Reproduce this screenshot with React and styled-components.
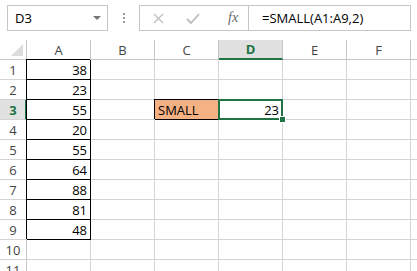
import React from 'react'
import styled, { createGlobalStyle, css } from 'styled-components'

const GlobalStyle = createGlobalStyle`
  body {
    margin: 0;
    background: #fff;
    font-family: "Open Sans", "Liberation Sans", sans-serif;
    font-size: 13px;
    color: #000;
  }
`

const GREEN = '#217346'
const GRID = '#d4d4d4'
const HEAD_LINE = '#c6c6c6'

const Page = styled.div`
  width: 417px;
  height: 271px;
  overflow: hidden;
`

const Toolbar = styled.div`
  display: flex;
  align-items: flex-start;
  height: 36px;
  padding: 5px 0 0 7px;
  box-sizing: border-box;
`

const NameBox = styled.div`
  width: 101px;
  height: 26px;
  box-sizing: border-box;
  border: 1px solid ${HEAD_LINE};
  display: flex;
  align-items: center;
  justify-content: space-between;
  padding: 0 6px 0 7px;
  color: #000;
`

const Caret = styled.span`
  width: 0;
  height: 0;
  border-left: 4px solid transparent;
  border-right: 4px solid transparent;
  border-top: 4px solid #777;
`

const Grip = styled.div`
  width: 31px;
  height: 26px;
  display: flex;
  flex-direction: column;
  align-items: center;
  justify-content: center;
  gap: 2px;

  span {
    width: 2px;
    height: 2px;
    background: #999;
  }
`

const FormulaBar = styled.div`
  width: 272px;
  height: 26px;
  box-sizing: border-box;
  border: 1px solid ${HEAD_LINE};
  display: flex;
  align-items: center;
`

const FxButtons = styled.div`
  width: 109px;
  height: 100%;
  box-sizing: border-box;
  border-right: 1px solid ${HEAD_LINE};
  display: flex;
  align-items: center;
  padding-left: 13px;
  gap: 22px;
`

const Fx = styled.span`
  font-family: "Liberation Serif", serif;
  font-style: italic;
  font-size: 14px;
  color: #666;
  margin-left: 6px;
`

const Formula = styled.div`
  padding-left: 13px;
  white-space: nowrap;
`

const Sheet = styled.div`
  margin-top: 4px;
  display: grid;
  grid-template-columns: 27px repeat(6, 64px) 1fr;
  grid-auto-rows: 20px;
`

const Corner = styled.div`
  position: relative;
  border-right: 1px solid ${HEAD_LINE};
  border-bottom: 1px solid ${HEAD_LINE};
  box-sizing: border-box;

  &::after {
    content: '';
    position: absolute;
    right: 3px;
    bottom: 3px;
    width: 0;
    height: 0;
    border-left: 12px solid transparent;
    border-bottom: 12px solid #dcdcdc;
  }
`

const ColHead = styled.div`
  box-sizing: border-box;
  border-right: 1px solid ${HEAD_LINE};
  border-bottom: 1px solid ${HEAD_LINE};
  text-align: center;
  line-height: 20px;
  color: #444;
  ${p => p.$active && css`
    background: #e1e1e1;
    color: ${GREEN};
    font-weight: bold;
    border-bottom: 2px solid ${GREEN};
    line-height: 19px;
  `}
`

const RowHead = styled.div`
  box-sizing: border-box;
  border-right: 1px solid ${HEAD_LINE};
  border-bottom: 1px solid ${GRID};
  text-align: center;
  line-height: 20px;
  color: #444;
  ${p => p.$active && css`
    background: #e1e1e1;
    color: ${GREEN};
    font-weight: bold;
    border-right: 2px solid ${GREEN};
    padding-left: 1px;
  `}
`

const Cell = styled.div`
  position: relative;
  box-sizing: border-box;
  border-right: 1px solid ${GRID};
  border-bottom: 1px solid ${GRID};
  line-height: 20px;
  padding: 0 3px;
  white-space: nowrap;
  text-align: ${p => (p.$num ? 'right' : 'left')};
  background: ${p => p.$fill || 'transparent'};
  ${p => p.$boxed && css`
    border-right-color: #000;
    border-bottom-color: #000;
    box-shadow: -1px -1px 0 #000;
  `}
  ${p => p.$selected && css`
    &::before {
      content: '';
      position: absolute;
      left: -1px;
      top: -1px;
      right: -1px;
      bottom: -1px;
      border: 2px solid ${GREEN};
    }
    &::after {
      content: '';
      position: absolute;
      right: -4px;
      bottom: -4px;
      width: 5px;
      height: 5px;
      background: ${GREEN};
      border: 1px solid #fff;
      z-index: 2;
    }
  `}
`

const columns = ['A', 'B', 'C', 'D', 'E', 'F', '']
const values = [38, 23, 55, 20, 55, 64, 88, 81, 48]

function cellFor(row, col) {
  if (col === 'A' && row <= 9) return <Cell key={col} $num $boxed>{values[row - 1]}</Cell>
  if (col === 'C' && row === 3) return <Cell key={col} $boxed $fill="#f4b183">SMALL</Cell>
  if (col === 'D' && row === 3) return <Cell key={col} $num $selected>23</Cell>
  return <Cell key={col || 'G'} />
}

export default function App() {
  const rows = Array.from({ length: 11 }, (_, i) => i + 1)
  return (
    <Page>
      <GlobalStyle />
      <Toolbar>
        <NameBox>
          <span>D3</span>
          <Caret />
        </NameBox>
        <Grip>
          <span /><span /><span />
        </Grip>
        <FormulaBar>
          <FxButtons>
            <svg width="11" height="11" viewBox="0 0 11 11">
              <path d="M1 1 L10 10 M10 1 L1 10" stroke="#bdbdbd" strokeWidth="1.3" fill="none" />
            </svg>
            <svg width="14" height="11" viewBox="0 0 14 11">
              <path d="M1 6 L5 10 L13 1" stroke="#bdbdbd" strokeWidth="1.8" fill="none" />
            </svg>
            <Fx>fx</Fx>
          </FxButtons>
          <Formula>=SMALL(A1:A9,2)</Formula>
        </FormulaBar>
      </Toolbar>
      <Sheet>
        <Corner />
        {columns.map(c => (
          <ColHead key={c || 'G'} $active={c === 'D'}>{c}</ColHead>
        ))}
        {rows.map(r => (
          <React.Fragment key={r}>
            <RowHead $active={r === 3}>{r}</RowHead>
            {columns.map(c => cellFor(r, c))}
          </React.Fragment>
        ))}
      </Sheet>
    </Page>
  )
}
